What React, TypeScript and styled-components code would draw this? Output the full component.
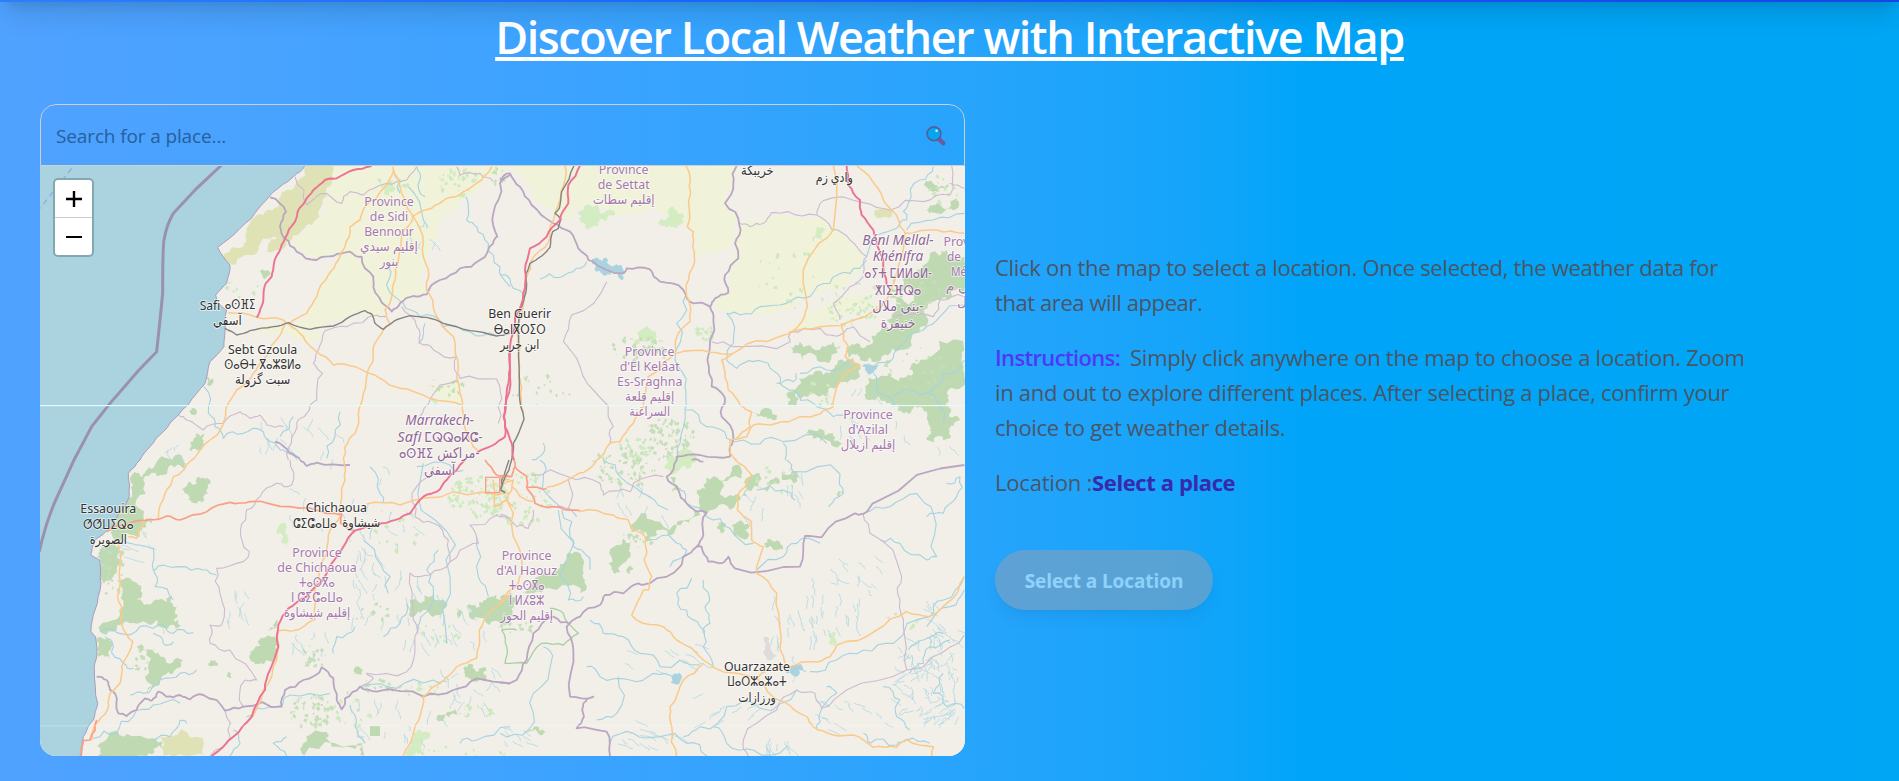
import React from "react";
import styled, { createGlobalStyle } from "styled-components";

const GlobalStyle = createGlobalStyle`
  *, *::before, *::after { box-sizing: border-box; }
  body { margin: 0; overflow: hidden; font-family: "Open Sans", "Noto Sans", sans-serif; }
  p, h1 { margin: 0; }
`;

const Page = styled.div`
  height: 781px;
  overflow: hidden;
  background: linear-gradient(to right in oklab, oklch(70.7% 0.165 254.624), oklch(68.5% 0.169 237.323));
`;

const NavBar = styled.nav`
  position: relative;
  height: 64px;
  margin-top: -62px;
  background: linear-gradient(to right, #2b7fff, #155dfc 50%, #1447e6);
  box-shadow: 0 20px 25px -5px rgba(0, 0, 0, 0.1), 0 8px 10px -6px rgba(0, 0, 0, 0.1);
`;

const Title = styled.h1`
  margin-top: 7px;
  height: 56px;
  line-height: 56px;
  text-align: center;
  color: #fff;
  font-size: 45px;
  font-weight: 600;
  letter-spacing: -1.42px;
  text-decoration: underline;
  text-decoration-thickness: 4px;
  text-underline-offset: 3px;
`;

const Columns = styled.main`
  display: grid;
  grid-template-columns: 925px 760px;
  column-gap: 30px;
  margin-top: 39px;
  padding-left: 40px;
`;

const MapCard = styled.section`
  display: flex;
  flex-direction: column;
  height: 652px;
  border-radius: 16px;
  overflow: hidden;
`;

const SearchRow = styled.div`
  display: flex;
  align-items: center;
  justify-content: space-between;
  height: 62px;
  padding: 1px 18px 0 15px;
  border: 1px solid #ccd0d6;
  border-radius: 16px 16px 0 0;
`;

const Placeholder = styled.span`
  font-size: 19px;
  letter-spacing: -0.13px;
  color: #26609b;
`;

const MapView = styled.div`
  position: relative;
  flex: 1;
  background: #f2efe9;
`;

const ZoomControl = styled.div`
  position: absolute;
  top: 12px;
  left: 13px;
  width: 41px;
  border: 2px solid #83a8b1;
  border-radius: 5px;
  background: #fff;
  overflow: hidden;
`;

const ZoomButton = styled.div`
  display: flex;
  align-items: center;
  justify-content: center;
  height: 37px;
  & + & { height: 38px; border-top: 1px solid #ccc; }
`;

const Info = styled.section`
  display: flex;
  flex-direction: column;
  align-items: flex-start;
  padding-top: 146px;
  font-size: 22px;
  line-height: 35px;
  color: #4a5565;
`;

const Paragraph = styled.p`
  margin-bottom: 20px;
`;

const Line = styled.span<{ $spacing?: number }>`
  display: block;
  white-space: nowrap;
  letter-spacing: ${(p) => p.$spacing ?? -0.3}px;
`;

const Strong = styled.span<{ $color: string; $weight?: number; $spacing: number; $gap?: number }>`
  font-weight: ${(p) => p.$weight ?? 600};
  color: ${(p) => p.$color};
  letter-spacing: ${(p) => p.$spacing}px;
  margin-right: ${(p) => p.$gap ?? 0}px;
`;

const SelectButton = styled.button`
  margin-top: 30px;
  width: 218px;
  height: 60px;
  padding: 2px 0 0;
  border: 0;
  border-radius: 30px;
  background: #99a1af;
  color: #fff;
  opacity: 0.5;
  font-family: inherit;
  font-size: 19px;
  font-weight: 700;
  letter-spacing: -0.09px;
  box-shadow: 0 10px 15px -3px rgba(0, 0, 0, 0.1), 0 4px 6px -4px rgba(0, 0, 0, 0.1);
`;

/* ---------- map geometry ---------- */

type Pt = [number, number];
const parse = (s: string): Pt[] => s.trim().split(/\s+/).map((p) => p.split(",").map(Number) as Pt);

const random = (seed: number) => {
  let s = seed;
  return () => {
    s = (s * 16807) % 2147483647;
    return s / 2147483647;
  };
};

const roughen = (pts: Pt[], amount: number, depth: number): Pt[] => {
  const next = random(Math.abs(Math.round(pts[0][0] * 31 + pts[0][1] * 7)) + 11);
  let line = pts;
  for (let d = 0; d < depth; d++) {
    const out: Pt[] = [line[0]];
    for (let i = 1; i < line.length; i++) {
      const [ax, ay] = line[i - 1];
      const [bx, by] = line[i];
      const off = (next() - 0.5) * amount;
      out.push([(ax + bx) / 2 - (by - ay) * off, (ay + by) / 2 + (bx - ax) * off], line[i]);
    }
    line = out;
  }
  return line;
};

const toPath = (s: string, amount = 0.2, depth = 2) =>
  "M" + roughen(parse(s), amount, depth).map((p) => p.map((v) => v.toFixed(1)).join(" ")).join("L");

interface Sheet {
  x: number;
  y: number;
  farm?: string[];
  scrub?: string[];
  forest: string[];
  light?: string[];
  speckle: number[][];
  /* centre x, centre y, radius x, radius y, count, slope */
  streams: number[][];
  lake?: string[];
  bare?: string[];
  river: string[];
  border: string[];
  thin: string[];
  park?: string[];
  road: string[];
  trunk?: string[];
  rail: string[];
  motorway: string[];
}

const sheets: Sheet[] = [
  {
    x: 30, y: 160,
    farm: ["905,17 1440,17 1400,45 1340,90 1300,110 1240,170 1190,290 1190,400 1120,430 1070,430 1040,480 1000,455 930,480 850,505 780,490 830,465 870,380 930,295 860,300 790,260 770,230 870,170 895,80", "640,510 800,495 880,520 850,545 790,530 700,520", "1190,680 1290,670 1295,730 1220,710"],
    scrub: ["830,17 910,17 905,70 890,110 870,170 830,195 790,225 750,270 710,275 715,250 740,232 700,235 650,285 610,315 578,290 600,270 625,265 650,215 700,165 720,150 745,140 760,95 800,65"],
    forest: ["480,845 525,822 520,845 500,870 480,870", "690,335 720,345 700,355", "485,745 500,755 490,765 478,755", "532,650 550,670 535,678"],
    light: ["1065,70 1090,60 1095,90 1075,108 1062,95", "1215,740 1210,710 1218,735"],
    speckle: [[1280, 60, 60, 50, 40], [1400, 50, 25, 25, 16], [640, 390, 60, 40, 10], [1240, 680, 60, 30, 14], [1080, 60, 60, 40, 10]],
    streams: [[800, 830, 120, 60, 14], [1180, 200, 50, 60, 6], [450, 870, 50, 20, 4]],
    river: ["1308,110 1310,180 1340,200 1375,250 1410,320 1440,380", "1080,320 1080,350 1120,430 1170,470 1240,500 1320,515 1400,528", "522,680 535,760 555,800 580,835 640,820 700,815 735,850 760,870 810,900", "1185,490 1165,550", "930,755 915,830 890,895", "1090,30 1110,100", "1160,20 1170,60 1185,110", "1135,80 1180,180 1190,205", "790,770 750,830"],
    border: ["720,112 768,155 750,200 765,235 800,275 860,300 910,288 960,275 995,290 1030,350 1030,380 1070,440 1085,455 1110,430 1150,408 1190,403 1230,360 1290,325 1350,300 1390,250 1402,230 1390,160 1410,70 1440,45", "735,845 780,880 810,895"],
    thin: ["795,50 830,135 890,100 935,130 960,95 1000,105 1040,80 1100,65 1130,60 1160,20", "1070,470 1040,465 950,500 885,512 865,570 850,610 878,640 860,720 830,760 800,790 785,830 775,900", "1115,440 1160,500 1170,550 1210,570 1280,590 1280,640 1290,655 1400,657 1410,690 1405,790", "1280,660 1230,675 1200,720 1170,770", "445,765 470,780 520,810 580,790 630,755 660,775 690,765 710,795 760,800", "1280,20 1290,45 1350,40 1390,65"],
    road: ["1385,20 1355,60 1300,95 1250,115 1205,145 1145,170", "1088,20 1090,35 1065,80 1005,140 990,180 960,200 945,260 925,300 895,345 860,410 830,460 775,492", "1090,30 1110,80 1125,120 1150,170 1180,250 1187,310 1190,390 1215,460 1270,530 1283,600 1290,700 1300,760 1320,840 1345,875", "1150,170 1115,225 1105,300 1095,360 1085,410 1065,450 1080,490 1035,550 1030,600 1012,640 1000,700 985,760 975,820 945,860 940,900", "595,458 680,472 760,480 775,492 820,530 860,575 910,615 975,620 1050,655 1110,685 1200,715 1295,735", "765,495 735,545 700,600 670,640 620,690 595,730 583,780 570,810 540,840 510,870 485,900"],
    rail: ["585,505 620,525 660,512 730,500 775,488 840,508 910,498 960,470 1005,452 1025,462 1035,490 1060,508 1090,485 1140,467 1190,472 1240,490 1320,512 1400,528 1440,520"],
    motorway: ["1025,18 970,30 920,55 885,60 850,90 825,125 805,150 795,185 765,235 748,275 732,310 725,350 705,375 700,420 690,450 680,472", "1440,580 1437,640 1430,700 1422,770 1425,830 1390,855 1340,880"],
  },
  {
    x: 500, y: 160,
    farm: ["30,17 710,17 700,70 675,130 715,190 700,250 590,290 560,190 440,150 260,140 200,180 170,165 100,120", "720,200 800,170 950,170 1090,280 1080,340 930,410 690,460 640,440 690,390", "870,500 1100,400 1130,440 960,500"],
    scrub: ["1125,150 1180,153 1178,170 1125,168"],
    forest: ["870,560 930,556 1000,545 1023,560 1005,580 940,582 880,580", "1040,560 1070,550 1120,545 1130,520 1180,470 1190,430 1240,400 1215,380 1170,385 1215,350 1260,330 1290,280 1340,270 1393,290 1393,400 1320,420 1270,470 1260,510 1200,570 1130,605 1080,600 1045,590", "920,650 990,640 1070,625 1050,660 1010,680 960,710 890,700 890,735 865,735 860,700", "1095,680 1180,655 1240,640 1260,600 1393,570 1393,650 1340,700 1345,740 1380,780 1350,800 1350,835 1280,840 1290,800 1260,740 1210,760 1160,730 1110,720", "1275,60 1310,75 1350,70 1340,95 1300,95", "1280,150 1310,130 1370,115 1365,150 1320,163", "920,820 1000,820 1030,850 960,845", "755,755 830,765 825,780 770,770", "1190,410 1280,470 1240,520 1160,480", "1060,590 1080,650 1010,640 1020,600"],
    light: ["230,160 300,160 330,145 320,180 290,200 240,190", "505,145 530,150 530,205 480,180 510,170", "945,215 978,208 965,240 942,245", "390,540 470,530 460,560 410,555"],
    speckle: [[1050, 430, 90, 70, 60], [420, 570, 90, 50, 50], [600, 520, 40, 25, 20], [500, 840, 80, 70, 80], [400, 870, 50, 35, 36], [120, 690, 90, 50, 16], [860, 350, 90, 100, 20], [1240, 380, 90, 80, 40], [1330, 90, 50, 50, 20], [1240, 640, 120, 80, 30], [960, 700, 80, 40, 16]],
    streams: [[1180, 820, 180, 50, 10], [1200, 740, 180, 60, 6]],
    lake: ["275,310 285,297 300,300 318,294 325,312 345,315 375,335 365,360 330,345 305,350 290,335", "1085,620 1100,615 1135,610 1130,628 1100,637"],
    river: ["120,358 180,352 220,335 260,305", "0,345 40,385 70,410", "560,400 530,490 525,600 555,680 555,750 540,850 530,900", "555,750 620,800 680,835 780,852 850,845 980,850", "680,460 720,465 780,440 860,430 930,410 990,370 1050,340 1100,300", "680,460 700,550 680,600 710,625 760,605 810,625 840,670 880,690 940,730 1000,770 1030,765", "1300,20 1260,60 1225,130 1220,180 1190,205 1100,290", "1220,210 1300,180 1393,160", "900,640 980,630 1060,600", "1100,625 1170,605 1200,560 1270,510 1320,470 1393,435", "1120,640 1130,690 1170,710 1180,740", "1180,710 1230,690 1290,700 1330,640 1393,600", "1290,700 1320,730 1330,790", "850,850 855,900", "830,670 880,665 890,640", "130,850 120,890 95,900"],
    border: ["0,60 30,40 60,80 95,135 160,190 210,215 235,265 265,300 320,330 370,340 380,325 450,328 480,365 550,390 580,430 630,440 645,415 685,398 675,345 715,295 705,250 718,195 675,130 700,70 710,17", "630,440 640,480 622,600 635,680 675,715 665,770 700,830 690,860 690,890 600,885 530,890 530,900"],
    thin: ["718,190 750,200 790,190 815,158 865,155 950,165 995,208 1050,240 1100,290 1090,340", "950,165 970,122 1090,128 1170,150 1270,125 1350,105 1355,17", "320,365 215,465 190,545 230,595 280,690 340,800 330,850", "635,545 700,560 870,545 870,515 960,505 990,525 1030,520 1060,500 1110,545", "1350,70 1393,85", "1090,350 1050,380 1000,430 1020,480", "1180,470 1300,470 1320,420 1393,410"],
    road: ["195,17 183,95 165,160 150,230 135,262 95,300 80,350 70,430 60,560 65,680 70,760", "558,17 572,100 562,200 580,215 578,260 583,290 568,340 560,410 572,450 570,485 530,530 525,580 490,610 445,650 430,740 400,790 360,845 330,850 290,900", "1000,17 1000,210 925,295 922,440 915,465 865,522", "1070,17 1115,60 1150,120 1180,155 1200,200 1215,220 1165,410", "530,580 630,577 695,582 740,552 860,523 960,500 1080,475 1140,445 1165,410", "695,582 665,600 675,650 685,690 720,735 755,755 750,800 705,838", "1215,220 1310,210 1393,220", "1025,490 1030,540 1045,560 1035,590 1080,615 1030,650 1005,700 1000,740 960,762 900,770 830,790 760,795 740,830 690,840 690,880 710,900"],
    rail: ["222,17 185,95 178,145 165,160 183,178 175,205 158,215 150,262 125,288 90,310 78,340 77,400 60,450 55,560 58,700 72,778 40,850 35,900"],
    motorway: ["240,17 205,75 205,130 180,180 140,230 90,265 75,330 70,400 45,470 30,560 30,650 15,740 15,800 35,850 42,900", "1040,17 1045,75 1080,120 1085,165 1120,210 1133,260 1150,300 1160,375"],
  },
  {
    x: 30, y: 460,
    forest: ["310,40 330,50 370,25 460,0 460,25 400,45 345,70 340,170 330,230 250,235 240,200 290,120 300,60", "465,80 500,70 505,52 533,55 520,110 495,130 465,100", "215,260 270,260 260,330 250,365 220,370 210,300", "270,370 325,375 320,420 385,420 430,405 440,440 425,480 455,495 400,525 380,480 300,490 215,520 280,440", "210,530 245,560 240,595 205,590", "320,560 350,570 375,555 400,590 460,600 430,640 390,670 350,700 345,650", "670,570 735,530 740,570 690,610 665,605", "745,480 730,505 708,505", "210,850 280,830 380,840 400,870 350,888 205,888", "820,850 890,815 900,845 1000,850 1003,888 822,888", "975,620 990,620 990,645 975,645", "1140,415 1170,430 1250,430 1240,455 1180,450 1140,470", "1310,440 1350,440 1380,410 1440,410 1440,480 1380,495 1320,475", "1300,625 1330,615 1370,630 1370,655 1305,650", "1220,780 1270,760 1320,770 1240,780", "535,610 555,600 565,612 540,618", "590,648 615,640 600,655", "1280,445 1300,460 1285,478", "345,180 365,190 350,235 340,215"],
    light: ["1150,820 1200,830 1185,888 1130,888", "745,205 755,190 765,215 770,260 758,250"],
    scrub: ["385,830 520,835 525,888 400,888"],
    speckle: [[1340, 110, 90, 60, 110], [840, 755, 65, 50, 60], [960, 750, 60, 60, 20], [850, 590, 40, 40, 20], [1230, 520, 60, 30, 14], [1040, 680, 60, 20, 14], [1170, 690, 90, 25, 26], [330, 600, 30, 40, 12], [1350, 750, 60, 20, 14], [1010, 460, 60, 30, 10], [1290, 880, 150, 20, 20], [240, 330, 40, 90, 24], [1100, 200, 80, 90, 16]],
    streams: [[1080, 330, 110, 180, 40], [1250, 470, 150, 80, 22], [620, 420, 30, 80, 8], [1100, 770, 150, 70, 14], [1330, 700, 110, 100, 16], [920, 90, 150, 100, 12], [290, 260, 90, 60, 8, 12], [840, 530, 60, 50, 8]],
    river: ["265,245 300,250 330,255 370,265 370,330 400,315 450,320 520,330 560,345", "370,330 375,380 430,420", "210,515 260,518 330,500 370,505 400,495 430,520 490,518", "370,520 400,550 430,545", "225,530 250,560 280,610 310,625", "500,630 450,640 390,660 340,700 300,705", "190,835 260,820 310,770 370,735 450,730", "370,840 420,830 450,780 470,790", "975,500 920,530 910,580", "1000,240 1050,310 1075,400", "1165,520 1185,460 1210,400 1190,330 1225,270", "1250,550 1260,350 1215,180 1180,10", "1060,530 1110,490 1130,430", "1340,230 1345,350 1375,410", "1020,20 1050,100 1060,130", "1000,680 1100,685 1210,660 1250,665", "960,735 975,800 1005,850", "610,810 630,850 600,888", "650,770 720,740 780,705 900,700", "770,830 730,850 770,888", "1440,800 1340,840 1290,850", "1160,20 1260,15 1300,30"],
    border: ["200,650 230,660 240,690 255,700 265,760 290,768 320,750 345,715 365,722 385,695 410,710 450,705 480,718 520,705 585,752 640,740 755,740 765,690 820,660 875,622 910,655 920,720 935,748 945,715 990,680 1040,695 1180,710 1270,690 1340,655 1440,670", "810,0 830,18 860,8 960,15"],
    thin: ["780,0 785,75 740,70 690,110 650,150 632,205 658,275 640,305 560,325 570,400 575,495 540,495 540,550 600,570 680,660 645,660 640,740", "585,752 600,830 540,888", "1210,20 1160,80 1155,170 1210,190 1255,240 1260,305 1330,250 1345,250 1320,195 1400,165 1440,175", "1260,305 1200,345 1140,340 1150,450 1155,560 1130,635 1010,640 1030,655 990,680"],
    road: ["485,0 430,50 405,100 385,175", "295,230 320,235 345,185", "265,250 270,320 262,410 275,440 275,490 308,545 275,620 270,670 240,700 232,750 195,795 185,840", "942,0 945,60 930,170 900,210 890,280 855,380 855,478 790,512 745,512 740,600 700,690 650,790", "1010,132 1110,135 1270,95 1440,98", "1440,400 1375,460 1348,510 1340,595 1280,620 1230,670 1180,710 1170,770 1150,820 1120,888", "1390,60 1395,140 1430,120", "1410,60 1440,60"],
    trunk: ["230,215 300,190 360,178 410,168 450,180 530,155 600,127 660,125 780,140 890,160 935,162 932,190 975,212", "1365,0 1400,45 1440,50", "200,780 180,840 160,840 150,888"],
    rail: ["1437,0 1415,60 1412,90 1425,98"],
    motorway: ["1305,0 1250,60 1230,88 1180,110 1140,160 1110,175 1055,190 975,212 940,260 905,310 870,370 830,410 775,445 745,495 745,560 720,630 705,690 665,770 610,830 545,888"],
  },
  {
    x: 500, y: 460,
    forest: ["600,140 690,105 740,90 750,50 780,40 780,80 690,150 610,160", "590,100 640,100 610,75 680,50 690,20 725,30 720,55 650,115", "395,215 400,190 480,185 580,145 600,165 530,200 470,210 440,245", "790,80 840,65 850,38 895,50 880,70 800,95", "350,255 395,245 385,270 360,335 335,330", "695,195 750,195 745,230 700,215", "650,185 675,200 665,220", "800,240 850,265 830,272 800,265", "195,305 245,292 248,345 240,400 170,390 100,400 60,400 150,345", "0,410 50,420 55,470 0,470", "80,818 135,817 130,824", "385,320 400,325 390,342", "1010,100 1030,95 1020,112", "510,50 530,75 540,100 515,95"],
    light: ["985,550 1000,515 1003,560", "500,0 590,0 540,30 510,35"],
    speckle: [[60, 120, 90, 90, 70], [370, 20, 100, 60, 70], [1200, 480, 60, 30, 8], [400, 240, 50, 40, 16], [820, 60, 70, 40, 16], [40, 500, 50, 20, 12]],
    streams: [[1300, 650, 90, 110, 30, -9], [1270, 620, 100, 100, 20, 9], [1310, 590, 80, 100, 26, 2], [1330, 480, 60, 60, 14, 8], [1000, 440, 80, 100, 24, 1], [880, 480, 60, 110, 16, 1], [480, 590, 120, 50, 12, 10], [820, 100, 90, 80, 10], [430, 820, 100, 40, 12, 11], [830, 850, 40, 15, 10], [1060, 330, 80, 60, 12, 8], [60, 820, 60, 30, 8, 10], [1330, 765, 55, 20, 18, -7], [700, 760, 120, 60, 10, -9], [1050, 760, 110, 50, 14, 8], [420, 130, 70, 60, 8]],
    lake: ["862,625 920,632 885,650 875,668", "515,655 545,645 540,665"],
    bare: ["792,532 808,535 812,560 830,590 815,600 800,600 790,580"],
    river: ["175,150 180,350 205,420 250,410", "185,150 210,230 245,270 270,330", "310,0 360,50 450,110 505,150", "120,0 130,60 180,140 230,170", "540,90 560,130 620,170 690,205 760,250", "450,240 520,240 560,270 510,320", "575,355 530,400 560,450 600,500 610,560 640,620", "610,360 615,440 630,490 610,520", "270,480 310,520 370,530 420,580 480,620 600,615", "260,620 300,650 390,660 460,640 530,655", "355,650 350,760 290,780", "130,560 155,600 100,700 85,810 0,820", "860,0 880,35 1020,42 1030,100 985,140", "1090,160 1170,140 1250,100 1300,160 1310,290 1280,300 1200,250 1140,240", "1280,170 1330,160 1370,110 1380,50 1340,70", "1393,350 1330,420 1290,470 1180,550 1090,570 1010,600 930,635", "1393,390 1350,440 1280,500", "890,690 780,745 680,740 600,800 550,830", "770,90 850,90 885,120", "770,330 850,290 890,250 960,250", "330,850 400,820 480,830 560,850 620,888", "640,800 680,850 760,870 860,860", "980,680 1010,700 960,760 950,810", "1090,820 1110,850 1190,855 1220,840 1290,850", "1230,640 1270,610 1290,560 1350,540", "1225,570 1270,540 1330,520", "1150,680 1200,720 1190,770 1230,810", "1330,640 1300,700 1340,740 1393,745"],
    border: ["530,0 500,50 535,90 560,130 585,152 620,158 610,225 590,260 550,290 540,320 450,370 415,370 370,400 315,405 300,435 240,470 200,500 220,570 210,710 280,710 250,730 252,770 230,805 320,815 330,888", "590,260 605,260 625,305 670,308 685,290 705,325 900,320 915,228 965,232 1065,160 1090,162 1130,125 1393,15", "210,492 160,470 100,520 80,600 50,660 0,668", "575,0 610,5"],
    thin: ["1090,165 1110,220 1205,350 1200,420 1210,500 1220,630", "1393,525 1300,590 1220,630 1040,690 965,745 945,700 890,690 830,750 730,840 745,888", "95,45 205,50 300,70 310,105 390,95 400,70 490,50", "205,60 205,145 170,140", "0,165 30,180 50,200 85,205 100,150"],
    park: ["150,445 190,460 235,520 190,555 125,550 80,610 15,610 20,560 5,510 50,510"],
    road: ["290,0 250,38 220,50 140,82", "240,155 340,165 385,180 400,210 435,230 440,270 432,300 455,350 445,390 430,390 395,465 410,480 490,500 530,540 610,600 640,622 770,655 850,725 920,770 940,800 1000,825 1060,825 1120,862 1190,862 1220,838 1300,860 1295,888", "705,0 755,45 710,110 712,150 755,185 755,240 790,260 770,340 830,400 842,520 855,610", "770,655 800,630 870,620 940,605 990,590 1010,555 1130,510 1220,455 1285,470 1340,430 1393,350", "610,612 550,660 510,740 515,800 530,888", "0,80 40,60 20,120 40,160 40,230 65,300 55,370 0,430", "35,80 60,110 100,125", "0,135 20,120 40,140"],
    trunk: ["42,0 45,20 80,50 80,82 140,87", "80,85 105,130 180,142 240,152", "0,50 35,50 45,20"],
    rail: ["35,0 12,60 0,90 15,98"],
    motorway: [],
  },
];

const Speckles = ({ area, fill }: { area: number[]; fill: string }) => {
  const [cx, cy, rx, ry, n] = area;
  const next = random(cx * 13 + cy * 5 + n);
  let d = "";
  for (let i = 0; i < n; i++) {
    const a = next() * 6.28;
    const r = Math.sqrt(next());
    const x = cx + Math.cos(a) * r * rx;
    const y = cy + Math.sin(a) * r * ry;
    const s = 3 + next() * 8;
    d += `M${x.toFixed(1)} ${y.toFixed(1)}l${(s * next()).toFixed(1)} ${(-s * 0.8).toFixed(1)}l${(s * 0.8).toFixed(1)} ${(s * next()).toFixed(1)}l${(-s * next()).toFixed(1)} ${s.toFixed(1)}z`;
  }
  return <path d={d} fill={fill} />;
};

const Streams = ({ area }: { area: number[] }) => {
  const [cx, cy, rx, ry, n, slope] = area;
  const next = random(cx * 3 + cy * 17 + n);
  let d = "";
  for (let i = 0; i < n; i++) {
    let x = Math.min(cx + (next() * 2 - 1) * rx, 1385);
    let y = Math.min(cy + (next() * 2 - 1) * ry, 880);
    const lean = slope ? slope * (0.3 + next() * 0.8) : (next() - 0.35) * 12;
    const drop = slope && Math.abs(slope) > 5 ? 5 : 9;
    d += `M${x.toFixed(1)} ${y.toFixed(1)}`;
    for (let k = 0; k < 4; k++) {
      x += lean + (next() - 0.5) * 10;
      y += drop * (0.1 + next() * 1.5);
      d += `L${x.toFixed(1)} ${y.toFixed(1)}`;
    }
  }
  return <path d={d} fill="none" stroke="#b2d9e2" strokeWidth={2.5} />;
};

const Areas = ({ list, fill, amount = 0.5 }: { list?: string[]; fill: string; amount?: number }) => (
  <>{(list ?? []).map((s) => <path key={s} d={toPath(s + " " + s.split(" ")[0], amount, 3) + "Z"} fill={fill} />)}</>
);

const Lines = ({ list, color, width, amount = 0.2 }: { list?: string[]; color: string; width: number; amount?: number }) => (
  <g fill="none" stroke={color} strokeWidth={width} strokeLinejoin="round">
    {(list ?? []).map((s) => <path key={s} d={toPath(s, amount)} />)}
  </g>
);

/* sheet index, centre x, baseline y, width, text */
type Label = [number, number, number, number, string];
const townLabels: Label[] = [
  [0, 540, 450, 62, "Safi"], [0, 630, 448, 92, "ⴰⵙⴼⵉ"], [0, 592, 496, 86, "آسفي"],
  [0, 698, 581, 208, "Sebt Gzoula"], [0, 698, 627, 230, "ⵙⴰⴱⵜ ⴳⴰⵣⵓⵍⴰ"], [0, 698, 673, 166, "سبت گزولة"],
  [1, 59, 475, 188, "Ben Guerir"], [1, 59, 522, 156, "ⴱⴰⵏⴳⵔⵉⵔ"], [1, 59, 568, 118, "ابن جرير"],
  [1, 772, 44, 98, "خريبكة"], [1, 1003, 65, 112, "وادي زم"],
  [2, 235, 159, 168, "Essaouira"], [2, 235, 206, 152, "ⵚⵚⵡⵉⵕⴰ"], [2, 235, 252, 112, "الصويرة"],
  [2, 919, 156, 184, "Chichaoua"], [2, 855, 203, 132, "ⵛⵉⵛⴰⵡⴰ"], [2, 994, 201, 114, "شيشاوة"],
  [3, 771, 632, 198, "Ouarzazate"], [3, 771, 679, 178, "ⵡⴰⵔⵣⴰⵣⴰⵜ"], [3, 771, 726, 112, "ورزازات"],
];
const provinceLabels: Label[] = [
  [0, 1077, 139, 149, "Province"], [0, 1077, 184, 115, "de Sidi"], [0, 1077, 229, 149, "Bennour"], [0, 1077, 274, 174, "إقليم سيدي"], [0, 1077, 319, 56, "بنور"],
  [1, 371, 41, 149, "Province"], [1, 371, 86, 156, "de Settat"], [1, 371, 131, 186, "إقليم سطات"],
  [1, 449, 588, 149, "Province"], [1, 449, 633, 180, "d'El Kelâat"], [1, 449, 678, 196, "Es-Sraghna"], [1, 449, 723, 148, "إقليم قلعة"], [1, 449, 768, 122, "السراغنة"],
  [1, 1104, 777, 149, "Province"], [1, 1104, 822, 120, "d'Azilal"], [1, 1104, 868, 164, "إقليم أزيلال"],
  [1, 1405, 257, 149, "Province"], [1, 1362, 302, 42, "de"], [1, 1405, 347, 104, "Médou"], [1, 1385, 393, 96, "بني م"], [1, 1386, 438, 30, "ل"],
  [2, 861, 291, 149, "Province"], [2, 861, 336, 238, "de Chichaoua"], [2, 861, 381, 108, "ⵜⴰⵙⴳⴰ"], [2, 861, 426, 156, "ⵏ ⵛⵉⵛⴰⵡⴰ"], [2, 861, 471, 200, "إقليم شيشاوة"],
  [3, 80, 300, 149, "Province"], [3, 80, 345, 182, "d'Al Haouz"], [3, 80, 390, 108, "ⵜⴰⵙⴳⴰ"], [3, 80, 435, 106, "ⵏ ⵍⵃⵓⵣ"], [3, 80, 480, 158, "إقليم الحوز"],
];
const regionLabels: Label[] = [
  [0, 1229, 795, 206, "Marrakech-"], [0, 1138, 845, 72, "Safi"], [0, 1270, 845, 174, "ⵎⵕⵕⴰⴽⵛ-"], [0, 1158, 895, 102, "ⴰⵙⴼⵉ"], [0, 1285, 895, 126, "مراكش-"], [2, 1229, 45, 94, "آسفي"],
  [1, 1194, 254, 214, "Béni Mellal-"], [1, 1194, 304, 152, "Khénifra"], [1, 1194, 354, 202, "ⴰⵢⵜ ⵎⵍⵍⴰⵍ-"], [1, 1194, 404, 140, "ⵅⵏⵉⴼⵕⴰ"], [1, 1194, 454, 154, "بني ملال-"], [1, 1194, 504, 104, "خنيفرة"],
];

const Labels = ({ list, color, size, italic }: { list: Label[]; color: string; size: number; italic?: boolean }) => (
  <g fontSize={size} textAnchor="middle" strokeLinejoin="round" fontFamily='"Noto Sans", "DejaVu Sans", sans-serif'>
    {list.map(([s, x, y, w, t]) => (
      <text
        key={`${s}-${x}-${y}`} x={sheets[s].x * 3 + x} y={sheets[s].y * 3 + y} textLength={w}
        lengthAdjust="spacingAndGlyphs" fontStyle={italic && /[A-Za-z]/.test(t) ? "italic" : "normal"}
        fill={color} stroke="#fff" strokeWidth={6} strokeOpacity={0.6} paintOrder="stroke"
      >
        {t}
      </text>
    ))}
  </g>
);

const COAST = "30,0 850,0 825,17 790,50 725,100 690,140 630,205 563,262 600,315 590,370 557,405 565,430 590,450 585,510 582,560 540,605 525,670 500,700 445,765 400,815 360,860 330,900 295,940 298,1010 240,1105 195,1140 182,1185 208,1200 213,1270 195,1350 183,1415 197,1430 200,1490 193,1530 203,1630 190,1680 160,1730 150,1800 30,1800";

const MapDrawing = () => (
  <svg width="925" height="590" viewBox="120 498 2775 1770" style={{ display: "block" }}>
    <rect x="120" y="495" width="2775" height="1773" fill="#f2efe9" />
    {sheets.map((s, i) => (
      <g key={i} transform={`translate(${s.x * 3} ${s.y * 3})`}>
        <Areas list={s.farm} fill="#f0f2da" amount={0.3} />
        <Areas list={s.scrub} fill="#dfe2b5" />
        <Areas list={s.light} fill="#d3ecc2" amount={0.9} />
        <Areas list={s.forest} fill="#bfdab2" amount={0.8} />
        {s.speckle.map((a, k) => <Speckles key={k} area={a} fill={k % 2 ? "#c5dfb8" : "#cdeabf"} />)}
      </g>
    ))}
    <rect x="1110" y="2178" width="30" height="30" fill="#bfdab2" />
    <g transform="translate(90 480)">
      <path d={toPath(COAST, 0.12, 2)} fill="#aad3df" stroke="#a99bbd" strokeWidth={3} />
      <path d="M575 15L500 85L430 160Q410 195 403 235Q398 250 398 400L390 480L380 575L325 632L240 730L185 800L132 900L75 1025Q45 1095 28 1175" fill="none" stroke="#9a90b0" strokeWidth={9} />
      <path d="M125 25L30 145" stroke="#8fa9e6" strokeWidth={4} strokeDasharray="17 13" />
    </g>
    {sheets.map((s, i) => (
      <g key={i} transform={`translate(${s.x * 3} ${s.y * 3})`}>
        <Areas list={s.bare} fill="#dddcda" />
        <Areas list={s.lake} fill="#aad3df" amount={0.9} />
        {s.streams.map((a, k) => <Streams key={k} area={a} />)}
        <Lines list={s.river} color="#a6d3df" width={3.4} amount={0.5} />
        <Lines list={s.park} color="#a8d0a0" width={4} />
        <Lines list={s.thin} color="#cdbcd0" width={3.4} amount={0.35} />
        <Lines list={s.border} color="#b9a6c1" width={5.4} amount={0.3} />
        <Lines list={s.road} color="#fbca8b" width={4.6} />
        <Lines list={s.trunk} color="#fa9f86" width={5} />
        <Lines list={s.rail} color="#85837f" width={4.2} amount={0.1} />
        <Lines list={s.motorway} color="#ec7391" width={5.8} amount={0.15} />
      </g>
    ))}
    <path d="M1457 1432h42v46h-42z" fill="none" stroke="#fa9f86" strokeWidth={4} />
    <rect x="120" y="1215" width="2775" height="3.5" fill="#e6fbfb" />
    <rect x="120" y="2176" width="2775" height="3" fill="#fff" opacity={0.3} />
    <Labels list={provinceLabels} color="#a679ad" size={40} />
    <Labels list={regionLabels} color="#906696" size={43} italic />
    <Labels list={townLabels} color="#333" size={40} />
  </svg>
);

const SearchIcon = () => (
  <svg width="20" height="20" viewBox="0 0 20 20">
    <path d="M12.4 12.4L17.3 17.3" stroke="#6c5aa0" strokeWidth="4.4" strokeLinecap="round" />
    <circle cx="8" cy="7.8" r="6.9" fill="#06a5ef" stroke="#5c5a9c" strokeWidth="1.6" />
    <circle cx="10.6" cy="4.8" r="1.3" fill="#d5f3ff" />
  </svg>
);

export default function App() {
  return (
    <Page>
      <GlobalStyle />
      <NavBar />
      <Title>Discover Local Weather with Interactive Map</Title>
      <Columns>
        <MapCard>
          <SearchRow>
            <Placeholder>Search for a place...</Placeholder>
            <SearchIcon />
          </SearchRow>
          <MapView>
            <MapDrawing />
            <ZoomControl>
              <ZoomButton>
                <svg width="16" height="16" viewBox="0 0 16 16"><path d="M0 8H16M8 0V16" stroke="#000" strokeWidth="2.4" /></svg>
              </ZoomButton>
              <ZoomButton>
                <svg width="16" height="16" viewBox="0 0 16 16"><path d="M0 8H16" stroke="#000" strokeWidth="2.2" /></svg>
              </ZoomButton>
            </ZoomControl>
          </MapView>
        </MapCard>
        <Info>
          <Paragraph>
            <Line>Click on the map to select a location. Once selected, the weather data for</Line>
            <Line $spacing={-0.42}>that area will appear.</Line>
          </Paragraph>
          <Paragraph>
            <Line $spacing={-0.26}>
              <Strong $color="#4f39f6" $spacing={-0.65} $gap={10}>Instructions:</Strong>
              Simply click anywhere on the map to choose a location. Zoom
            </Line>
            <Line $spacing={-0.31}>in and out to explore different places. After selecting a place, confirm your</Line>
            <Line $spacing={-0.3}>choice to get weather details.</Line>
          </Paragraph>
          <Paragraph>
            <Line>
              <Strong $color="#4a5565" $weight={500} $spacing={-0.2}>Location :</Strong>
              <Strong $color="#372aac" $weight={700} $spacing={-0.4}>Select a place</Strong>
            </Line>
          </Paragraph>
          <SelectButton>Select a Location</SelectButton>
        </Info>
      </Columns>
    </Page>
  );
}
